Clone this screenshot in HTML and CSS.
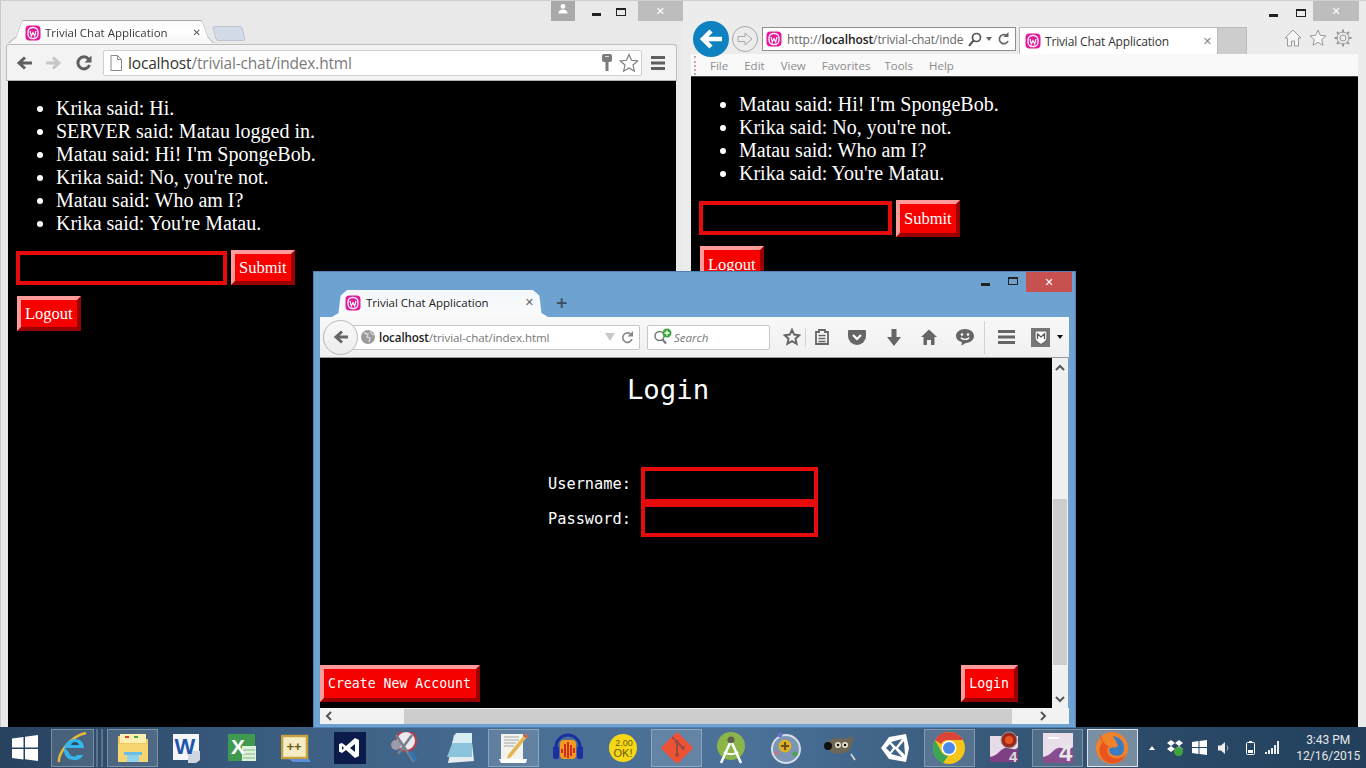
FILE: index.html
```html
<!DOCTYPE html>
<html lang="en">
<head>
<meta charset="utf-8">
<title>Trivial Chat Application</title>
<link rel="stylesheet" href="styles.css">
</head>
<body>
<svg class="defs" width="0" height="0">
  <symbol id="wamp" viewBox="0 0 16 16">
    <rect x="0.5" y="0.5" width="15" height="15" rx="4" fill="#e3189b"/>
    <rect x="3" y="2.5" width="10" height="11" rx="4.5" fill="none" stroke="#fff" stroke-width="1.3"/>
    <path d="M5 6l1.300 5 1.700-3.500L9.700 11 11 6" fill="none" stroke="#fff" stroke-width="1.200"/>
  </symbol>
</svg>

<main class="desktop">

  <!-- Chrome -->
  <section class="win win-chrome">
    <div class="c-top">
      <span class="c-profile"><svg width="12" height="12" viewBox="0 0 12 12"><circle cx="6" cy="3.4" r="2.4" fill="#fff"/><path d="M1.5 10.5c0-3 2-4 4.500-4s4.500 1 4.500 4z" fill="#fff"/></svg></span>
      <span class="w-min dark c-min"></span>
      <span class="w-max dark c-max"></span>
      <span class="w-close c-close">✕</span>
    </div>
    <div class="c-tabs">
      <div class="c-tabshadow"><div class="c-tab">
        <svg class="fav" width="16" height="16"><use href="#wamp"/></svg>
        <span class="c-tabtitle">Trivial Chat Application</span>
        <span class="c-x">✕</span>
      </div></div>
      <div class="c-newtab"></div>
    </div>
    <div class="c-bar">
      <svg class="c-nav" width="18" height="16" viewBox="0 0 18 16"><path d="M16 8H4M9 2.500 3 8l6 5.500" fill="none" stroke="#5f5f5f" stroke-width="3"/></svg>
      <svg class="c-nav2" width="18" height="16" viewBox="0 0 18 16"><path d="M2 8h12M9 2.500 15 8l-6 5.500" fill="none" stroke="#c6c6c6" stroke-width="3"/></svg>
      <svg class="c-nav3" width="18" height="18" viewBox="0 0 18 18"><path d="M14.500 11a6 6 0 1 1-1-6" fill="none" stroke="#5f5f5f" stroke-width="3"/><path d="M16.500 1.500v7h-7z" fill="#5f5f5f"/></svg>
      <div class="c-omni">
        <svg width="12" height="16" viewBox="0 0 12 16"><path d="M1 .5h6.500l4 4v11H1z" fill="#fff" stroke="#8a8a8a"/><path d="M7.500.5v4h4" fill="none" stroke="#8a8a8a"/></svg>
        <span class="c-url"><b>localhost</b>/trivial-chat/index.html</span>
        <svg class="c-key" width="10" height="17" viewBox="0 0 10 17"><path d="M2 0h6a2 2 0 0 1 2 2v4a2 2 0 0 1-2 2H6.500v9h-3V8H2a2 2 0 0 1-2-2V2a2 2 0 0 1 2-2z" fill="#7b7b7b"/><path d="M3 2.500h4" stroke="#ddd"/></svg>
        <svg width="20" height="20" viewBox="0 0 20 20"><path d="M10 1.500l2.500 5.800 6.200.6-4.700 4.100 1.400 6.200L10 15l-5.400 3.200L6 12 1.300 7.900l6.200-.6z" fill="#fff" stroke="#777" stroke-width="1.100"/></svg>
      </div>
      <svg class="c-menu" width="14" height="14" viewBox="0 0 14 14"><path d="M0 0h14v3H0zM0 5.500h14v3H0zM0 11h14v3H0z" fill="#5f5f5f"/></svg>
    </div>
    <div class="chat chat-c">
      <ul class="msgs">
        <li>Krika said: Hi.</li>
        <li>SERVER said: Matau logged in.</li>
        <li>Matau said: Hi! I'm SpongeBob.</li>
        <li>Krika said: No, you're not.</li>
        <li>Matau said: Who am I?</li>
        <li>Krika said: You're Matau.</li>
      </ul>
      <div class="send">
        <div class="field field-c"></div>
        <div class="btn">Submit</div>
      </div>
      <div class="logout"><div class="btn">Logout</div></div>
    </div>
  </section>

  <!-- Internet Explorer -->
  <section class="win win-ie">
    <div class="i-top">
      <span class="w-min dark i-min"></span>
      <span class="w-max dark i-max"></span>
      <span class="w-close i-close">✕</span>
    </div>
    <div class="i-bar">
      <span class="i-back"><svg width="26" height="22" viewBox="0 0 26 22"><path d="M24 11H6M13 3l-8 8 8 8" fill="none" stroke="#fff" stroke-width="4.500"/></svg></span>
      <span class="i-fwd"><svg width="16" height="14" viewBox="0 0 16 14"><path d="M1 4.500h7V1l7 6-7 6V9.500H1z" fill="none" stroke="#a9a9a9"/></svg></span>
      <div class="i-addr">
        <svg class="fav" width="16" height="16"><use href="#wamp"/></svg>
        <span class="i-url">http://<b>localhost</b>/trivial-chat/inde</span>
        <svg width="14" height="15" viewBox="0 0 14 15"><circle cx="8.500" cy="5.500" r="4" fill="none" stroke="#555" stroke-width="1.700"/><path d="M5.500 8.500 1 14" stroke="#555" stroke-width="2"/></svg>
        <span class="tri"></span>
        <svg width="12" height="14" viewBox="0 0 12 14"><path d="M10 9a4.500 4.500 0 1 1-1.500-5.500" fill="none" stroke="#666" stroke-width="1.700"/><path d="M10.500 0v5h-5z" fill="#666"/></svg>
      </div>
      <div class="i-tab">
        <svg class="fav" width="16" height="16"><use href="#wamp"/></svg>
        <span class="i-tabtitle">Trivial Chat Application</span>
        <span class="i-x">✕</span>
      </div>
      <div class="i-newtab"></div>
      <div class="i-tools">
        <svg width="18" height="18" viewBox="0 0 18 18"><path d="M9 1 1 9h2.500v8H7.500v-5h3v5h4V9H17z" fill="#f6f6f6" stroke="#9a9a9a"/></svg>
        <svg width="18" height="18" viewBox="0 0 18 18"><path d="M9 1l2.300 5.300 5.700.5-4.300 3.800 1.300 5.700L9 13.300l-5 3 1.300-5.700L1 6.800l5.700-.5z" fill="#f6f6f6" stroke="#9a9a9a"/></svg>
        <svg width="18" height="18" viewBox="0 0 18 18"><circle cx="9" cy="9" r="3" fill="none" stroke="#9a9a9a"/><circle cx="9" cy="9" r="6" fill="none" stroke="#9a9a9a"/><path d="M9 .5v3M9 14.500v3M.5 9h3M14.500 9h3M3 3l2 2M13 13l2 2M15 3l-2 2M5 13l-2 2" stroke="#9a9a9a" stroke-width="2"/></svg>
      </div>
    </div>
    <nav class="i-menu">
      <span class="i-grip"></span>
      <span class="m1">File</span><span class="m2">Edit</span><span class="m3">View</span><span class="m4">Favorites</span><span class="m5">Tools</span><span>Help</span>
    </nav>
    <div class="chat chat-i">
      <ul class="msgs">
        <li>Matau said: Hi! I'm SpongeBob.</li>
        <li>Krika said: No, you're not.</li>
        <li>Matau said: Who am I?</li>
        <li>Krika said: You're Matau.</li>
      </ul>
      <div class="send">
        <div class="field field-i"></div>
        <div class="btn">Submit</div>
      </div>
      <div class="logout"><div class="btn">Logout</div></div>
    </div>
  </section>

  <!-- Firefox -->
  <section class="win win-ff">
    <div class="f-top">
      <span class="w-min dark f-min"></span>
      <span class="w-max dark f-max"></span>
      <span class="w-close f-close">✕</span>
    </div>
    <div class="f-tabs">
      <div class="f-tab">
        <svg class="fav" width="16" height="16"><use href="#wamp"/></svg>
        <span class="f-tabtitle">Trivial Chat Application</span>
        <span class="f-x">✕</span>
      </div>
      <span class="f-plus">+</span>
    </div>
    <div class="f-bar">
      <div class="f-url">
        <span class="f-back"><svg width="16" height="14" viewBox="0 0 16 14"><path d="M15 7H4M9 1.500 3 7l6 5.500" fill="none" stroke="#666" stroke-width="3"/></svg></span>
        <svg width="14" height="14" viewBox="0 0 14 14"><circle cx="7" cy="7" r="7" fill="#9b9b9b"/><path d="M3 3l4 1-1 3 3 1-1 4M9 1l2 3 2 1" fill="none" stroke="#dcdcdc" stroke-width="1.300"/></svg>
        <span class="f-urltext"><b>localhost</b>/trivial-chat/index.html</span>
        <span class="f-drop"></span>
        <svg width="13" height="13" viewBox="0 0 13 13"><path d="M11 8a4.700 4.700 0 1 1-1.500-5" fill="none" stroke="#888" stroke-width="1.600"/><path d="M12 0v5.500H6.500z" fill="#888"/></svg>
      </div>
      <div class="f-search">
        <svg width="20" height="18" viewBox="0 0 20 18"><circle cx="6.500" cy="8" r="4.500" fill="none" stroke="#777" stroke-width="1.500"/><path d="M9.500 11.500l3.500 4" stroke="#777" stroke-width="2"/><circle cx="14" cy="5" r="4.500" fill="#3da53d"/><path d="M14 2.500v5M11.500 5h5" stroke="#fff" stroke-width="1.300"/></svg>
        <i>Search</i>
      </div>
      <div class="f-tools">
        <svg class="t-star" width="18" height="18" viewBox="0 0 18 18"><path d="M9 1.800l2.200 4.800 5.200.6-3.900 3.500 1.100 5.100L9 13.200l-4.600 2.600 1.100-5.100L1.600 7.200l5.200-.6z" fill="none" stroke="#666" stroke-width="2"/></svg>
        <span class="t-sep2"></span>
        <svg class="t-clip" width="14" height="16" viewBox="0 0 14 16"><path d="M1 3h3V1h6v2h3v12H1z" fill="none" stroke="#666" stroke-width="1.800"/><path d="M3.500 6.500h7M3.500 9.500h7M3.500 12.500h7" stroke="#666" stroke-width="1.500"/></svg>
        <svg class="t-pocket" width="18" height="15" viewBox="0 0 18 15"><path d="M1 0h16a1 1 0 0 1 1 1v5a9 9 0 0 1-18 0V1a1 1 0 0 1 1-1z" fill="#666"/><path d="M5 5l4 4 4-4" fill="none" stroke="#fff" stroke-width="2.200"/></svg>
        <svg class="t-down" width="14" height="17" viewBox="0 0 14 17"><path d="M4.500 0h5v8H14l-7 9-7-9h4.500z" fill="#666"/></svg>
        <svg class="t-home" width="16" height="16" viewBox="0 0 16 16"><path d="M8 .5 16 8h-2.500v8H10v-5H6v5H2.500V8H0z" fill="#666"/></svg>
        <svg class="t-chat" width="18" height="17" viewBox="0 0 18 17"><path d="M9 0c5 0 9 3 9 7s-4 7-8 7c-1 0-2 1.500-5 2.500 1-1.500 1-2.500.5-3.500C2 12 0 10 0 7c0-4 4-7 9-7z" fill="#666"/><circle cx="6" cy="5.500" r="1.300" fill="#fff"/><circle cx="12" cy="5.500" r="1.300" fill="#fff"/><path d="M5 8.500c1 2.500 7 2.500 8 0" fill="none" stroke="#fff" stroke-width="1.300"/></svg>
        <span class="t-sep"></span>
        <svg class="t-menu" width="17" height="14" viewBox="0 0 17 14"><path d="M0 0h17v3H0zM0 5.500h17v3H0zM0 11h17v3H0z" fill="#666"/></svg>
        <span class="t-shield"><svg width="14" height="15" viewBox="0 0 14 15"><path d="M1 1h12v7c0 3-3 5-6 6.500C4 13 1 11 1 8z" fill="#fff" stroke="#666" stroke-width="1.200"/><path d="M3.500 9V4l3.500 3 3.500-3v5" fill="none" stroke="#555" stroke-width="1.300"/></svg></span>
        <span class="t-tri"></span>
      </div>
    </div>
    <div class="f-view">
      <div class="f-page">
        <div class="login">
          <h1 class="login-h">Login</h1>
          <div class="login-row login-row1"><label>Username:</label><div class="field field-l"></div></div>
          <div class="login-row login-row2"><label>Password:</label><div class="field field-l2"></div></div>
          <div class="login-foot">
            <div class="btn btn-mono">Create New Account</div>
            <div class="btn btn-mono">Login</div>
          </div>
        </div>
        <div class="vscroll">
          <svg width="10" height="7" viewBox="0 0 10 7"><path d="M1 6l4-4 4 4" fill="none" stroke="#555" stroke-width="2"/></svg>
          <span class="v-thumb"></span>
          <svg width="10" height="7" viewBox="0 0 10 7"><path d="M1 1l4 4 4-4" fill="none" stroke="#555" stroke-width="2"/></svg>
        </div>
      </div>
      <div class="hscroll">
        <span class="h-left"><svg width="7" height="10" viewBox="0 0 7 10"><path d="M6 1 2 5l4 4" fill="none" stroke="#555" stroke-width="2"/></svg></span>
        <span class="h-thumb"></span>
        <span class="h-right"><svg width="7" height="10" viewBox="0 0 7 10"><path d="M1 1l4 4-4 4" fill="none" stroke="#555" stroke-width="2"/></svg></span>
      </div>
    </div>
  </section>

  <!-- Taskbar -->
  <footer class="taskbar">
    <div class="start"><svg width="26" height="26" viewBox="0 0 26 26"><path d="M0 3.500 11.500 2v10.500H0zM13 1.800 26 0v12.500H13zM0 14h11.500v10.500L0 23zM13 14h13v12l-13-1.700z" fill="#fff"/></svg></div>
    <div class="cell cell-ie on">
      <svg width="32" height="32" viewBox="0 0 32 32"><path d="M2 30C1 22 13 4 29 1" fill="none" stroke="#e8b93a" stroke-width="2.500"/><path d="M8 16h19c0-6-4-9-9-9-6 0-11 5-11 11s4 10 10 10c5 0 8-2 9-5h-6c-1 1-2 1.500-3 1.500-3 0-5-2-5-4z" fill="#35b6ea"/><path d="M14 13h8c-.5-2-2-3-4-3s-3.500 1-4 3z" fill="#2a4a68"/></svg>
    </div>
    <div class="grip"></div>
    <div class="cell on">
      <svg width="32" height="30" viewBox="0 0 32 30"><path d="M1 3h12l2 3h16v23H1z" fill="#f3c95f"/><rect x="3" y="1" width="26" height="9" fill="#fdf0b0"/><rect x="8" y="3" width="4" height="2" fill="#d6463c"/><rect x="17" y="3" width="4" height="2" fill="#4aa34a"/><path d="M1 11h30v18H1z" fill="#f7d571"/><path d="M10 22h12v7H10z" fill="#8fd3ee"/><path d="M7 19h18v3H7z" fill="#6bbfe6"/></svg>
    </div>
    <div class="cell"><svg width="30" height="30" viewBox="0 0 30 30"><rect x="1" y="1" width="26" height="26" fill="#f4f6fa"/><path d="M16 18h12v9l-4 3H16z" fill="#cfd6e2"/><text x="13" y="21" font-size="22" font-weight="700" text-anchor="middle" fill="#1f55ab" font-family="Liberation Sans, sans-serif">W</text></svg></div>
    <div class="cell"><svg width="30" height="30" viewBox="0 0 30 30"><rect x="1" y="1" width="27" height="27" fill="#3f9a4f"/><path d="M15 13h14v15H15z" fill="#dff0dc"/><path d="M16 17h12M16 21h12M16 25h12" stroke="#7fb986"/><text x="11" y="21" font-size="21" font-weight="700" text-anchor="middle" fill="#fff" font-family="Liberation Sans, sans-serif">X</text></svg></div>
    <div class="cell"><svg width="30" height="28" viewBox="0 0 30 28"><rect x="1" y="2" width="25" height="22" fill="#f5ecc4" stroke="#c5a13f" stroke-width="2.500"/><path d="M8 25h20l2 3H12z" fill="#5b8fd8"/><text x="13" y="17" font-size="13" font-weight="700" text-anchor="middle" fill="#6d5a14" font-family="Liberation Sans, sans-serif">++</text></svg></div>
    <div class="cell"><svg width="32" height="32" viewBox="0 0 32 32"><rect width="32" height="32" fill="#0b1c4a"/><path d="M21 6 25 8v16l-4 2-9-8-4 3-3-1.500V12L8 11l4 3zM21 12l-5 4 5 4zM8 14v4l2-2z" fill="#fff" fill-rule="evenodd"/></svg></div>
    <div class="cell"><svg width="30" height="32" viewBox="0 0 30 32"><circle cx="16" cy="9" r="10" fill="#e9e9ef" stroke="#b4404f" stroke-width="2"/><circle cx="6" cy="13" r="5" fill="#9b9bab"/><path d="M6 3 24 30M22 3 8 22" stroke="#777f8d" stroke-width="2.500"/><path d="M20 20l6 9" stroke="#2f78b5" stroke-width="4"/></svg></div>
    <div class="cell"><svg width="30" height="32" viewBox="0 0 30 32"><path d="M10 3 27 1l3 28-26 2z" fill="#e6ebef"/><path d="M12 1h16v24H3z" fill="#8cc3dd"/><path d="M12 1h16v10H8z" fill="#d9edf5"/></svg></div>
    <div class="cell on">
      <svg width="32" height="34" viewBox="0 0 32 34"><path d="M3 3h22v26H3z" fill="#f2f2ee"/><path d="M6 6h15M6 9h15M6 12h12M6 15h10" stroke="#a4a4a4"/><path d="M1 28h28l-1 4H3z" fill="#fff"/><path d="M10 24 27 3l3 2-17 21-4 2z" fill="#e5b34f"/><path d="M27 3l3 2-2 2-3-2z" fill="#d35a4a"/></svg>
    </div>
    <div class="cell"><svg width="30" height="30" viewBox="0 0 30 30"><path d="M3 18v-4a12 12 0 0 1 24 0v4" fill="none" stroke="#1c2f9e" stroke-width="3"/><rect x="0" y="13" width="6" height="13" rx="2" fill="#1c2f9e"/><rect x="24" y="13" width="6" height="13" rx="2" fill="#1c2f9e"/><rect x="7" y="7" width="16" height="19" rx="4" fill="#f59a1f"/><path d="M9 16v4M12 11v13M15 9v16M18 12v11M21 15v5" stroke="#cf2f23" stroke-width="2"/></svg></div>
    <div class="cell"><svg width="30" height="30" viewBox="0 0 30 30"><circle cx="15" cy="15" r="14" fill="#f6d814"/><text x="16" y="13" font-size="9" text-anchor="middle" fill="#665a10" font-family="Liberation Sans, sans-serif">2.00</text><text x="15" y="24" font-size="11" text-anchor="middle" fill="#665a10" font-family="Liberation Sans, sans-serif">OK!</text></svg></div>
    <div class="cell on"><svg width="34" height="34" viewBox="0 0 34 34"><rect x="5.500" y="5.500" width="23" height="23" rx="2" transform="rotate(45 17 17)" fill="#ee5235"/><path d="M12 6l5 5v13M17 11l6 6" fill="none" stroke="#9c4a42" stroke-width="2"/><circle cx="17" cy="11" r="2" fill="#9c4a42"/><circle cx="17" cy="24" r="2" fill="#9c4a42"/><circle cx="23" cy="17" r="2" fill="#9c4a42"/></svg></div>
    <div class="cell"><svg width="28" height="32" viewBox="0 0 28 32"><circle cx="14" cy="14" r="14" fill="#8bb54a"/><circle cx="14" cy="8" r="3.500" fill="#5e5f4f"/><path d="M13 11 4 31M15 11l9 20" stroke="#fff" stroke-width="2.500"/><path d="M7 20c4 3 10 3 14 0" fill="none" stroke="#fff" stroke-width="2"/></svg></div>
    <div class="cell"><svg width="32" height="32" viewBox="0 0 32 32"><circle cx="16" cy="17" r="14" fill="#7b95b4" stroke="#d6dfe9" stroke-width="2"/><circle cx="15" cy="14" r="6.500" fill="#dcb126"/><path d="M15 10v8M11 14h8" stroke="#6a4f0f" stroke-width="2"/><circle cx="10" cy="3" r="2.500" fill="#6870c8"/><circle cx="25" cy="22" r="2.500" fill="#4ea04e"/><circle cx="7" cy="21" r="2" fill="#d47272"/></svg></div>
    <div class="cell"><svg width="34" height="26" viewBox="0 0 34 26"><path d="M2 9c6-6 14-7 18-5l10-3c0 6-1 12-5 15-5 3-13 4-17 1z" fill="#6e6756"/><circle cx="5" cy="11" r="4" fill="#111"/><circle cx="15" cy="10" r="3" fill="#e9e4d0"/><circle cx="22" cy="10" r="3" fill="#e9e4d0"/><circle cx="15" cy="10" r="1.300" fill="#111"/><circle cx="22" cy="10" r="1.300" fill="#111"/><path d="M28 19l4 6" stroke="#ddd" stroke-width="1.500"/></svg></div>
    <div class="cell"><svg width="30" height="30" viewBox="0 0 30 30"><path fill-rule="evenodd" fill="#fff" d="M1 15 9 4 26 1l3 14-3 14-17-3zM11 9l11-3-6 8zM24 8l1 14-7-7zM11 21l4-5 7 8zM6 15l4-4 3 4-3 4z"/></svg></div>
    <div class="cell on"><svg width="34" height="34" viewBox="0 0 34 34"><circle cx="17" cy="17" r="16" fill="#f5c518"/><path d="M17 1a16 16 0 0 1 14 8H17a8 8 0 0 0-8 4L3 9a16 16 0 0 1 14-8z" fill="#dd4438"/><path d="M3 9l7 13a8 8 0 0 0 6 3L11 32A16 16 0 0 1 3 9z" fill="#3aa757"/><circle cx="17" cy="17" r="7.500" fill="#fff"/><circle cx="17" cy="17" r="6" fill="#4b8be8"/></svg></div>
    <div class="cell"><svg class="spill" width="30" height="34" viewBox="0 0 30 34"><path d="M1 5h28v26H1z" fill="#e7dbe8"/><path d="M1 26c8-1 10-8 15-9s10 4 13-1v15H1z" fill="#7e3f83"/><circle cx="20" cy="9" r="8" fill="#9a2a1f" stroke="#9b9b9b"/><circle cx="20" cy="9" r="4" fill="#e8551e"/><text x="20" y="31" font-size="15" font-weight="700" fill="#ddd" font-family="Liberation Sans, sans-serif">4</text></svg></div>
    <div class="cell on"><svg class="spill" width="32" height="32" viewBox="0 0 32 32"><path d="M1 1h30v30H1z" fill="#eadeea"/><path d="M1 25c8-1 10-8 15-9s10 4 15-1v16H1z" fill="#8a4d8e"/><path d="M6 5h11v2H6z" fill="#fff"/><text x="17" y="29" font-size="24" font-weight="700" fill="#e8e8e8" font-family="Liberation Sans, sans-serif">4</text></svg></div>
    <div class="cell cell-active"><svg width="34" height="34" viewBox="0 0 34 34"><circle cx="17" cy="17" r="16" fill="#f0822a"/><path d="M18 5a12 12 0 0 1 11 12c0 3-1 5-3 7-3 1-7 1-10-1-2-2-2-4-1-6 2-1 4-1 5 0l3-2c-1-3-3-7-5-10z" fill="#3a7cc4"/><path d="M5 3c0 5 1 7 3 8-5 5-5 14 2 19 8 5 18 2 21-7-3 4-10 6-15 3-4-2-5-8-2-11-4 0-7-6-9-12z" fill="#e8531f"/></svg></div>
    <div class="tray">
      <span class="tray-up"></span>
      <svg class="tr-drop" width="16" height="17" viewBox="0 0 16 17"><path d="M4 1 8 4 4 7 0 4zM12 1l4 3-4 3-4-3zM4 7l4 3-4 3-4-3zM12 7l4 3-4 3-4-3z" fill="#fff"/><circle cx="11.500" cy="12.500" r="4.500" fill="#3fa33f"/></svg>
      <svg class="tr-win" width="15" height="15" viewBox="0 0 15 15"><path d="M0 2l6.500-1v6H0zM7.500 1 15 0v7H7.500zM0 8h6.500v6L0 13zM7.500 8H15v7l-7.500-1z" fill="#fff"/></svg>
      <svg class="tr-vol" width="12" height="14" viewBox="0 0 12 14"><path d="M0 4.500h3L7 1v12L3 9.500H0z" fill="#eee"/><path d="M9 4.500c1 1.500 1 3.500 0 5" fill="none" stroke="#bbb"/></svg>
      <svg class="tr-bat" width="9" height="14" viewBox="0 0 9 14"><rect x=".5" y="1.500" width="8" height="12" rx="1" fill="none" stroke="#fff"/><rect x="3" y="0" width="3" height="2" fill="#fff"/><rect x="2" y="9" width="5" height="3" fill="#fff"/></svg>
      <svg class="tr-sig" width="15" height="13" viewBox="0 0 15 13"><path d="M0 11h2v2H0zM3 9h2v4H3zM6 7h2v6H6zM9 4h2v9H9zM12 0h2v13h-2z" fill="#eee"/></svg>
      <div class="clock"><span>3:43 PM</span><span>12/16/2015</span></div>
    </div>
  </footer>
</main>
</body>
</html>
```

FILE: styles.css
```css
* { box-sizing: border-box; }
html, body { margin: 0; padding: 0; }
body { width: 1366px; height: 768px; overflow: hidden; background: #000; font-family: "Open Sans", sans-serif; }
.defs { position: absolute; }
.desktop { position: relative; width: 1366px; height: 768px; overflow: hidden; background: #2c4c6b; }
svg { display: block; flex: none; }
svg.spill { overflow: visible; }
.fav { flex: none; }

/* windows sit on a free desktop */
.win { position: absolute; display: flex; flex-direction: column; }
.win-chrome { left: 0; top: 0; width: 683px; height: 728px; background: #e9e9e9; border-left: 1px solid #c9c9c9; border-top: 1px solid #cfcfcf; }
.win-ie { left: 683px; top: 0; width: 683px; height: 728px; background: #ececec; border-top: 1px solid #cfcfcf; }
.win-ff { left: 313px; top: 271px; width: 763px; height: 457px; background: #6da2d1; border: 1px solid #4f83b5; z-index: 2; }

/* window controls */
.w-min { width: 9px; height: 3px; background: #222; margin-top: 12px; }
.w-max { width: 10px; height: 8px; border: 1px solid #222; border-top-width: 2px; margin-top: 7px; }
.w-close { display: flex; align-items: center; justify-content: center; color: #fff; font-size: 11px; font-family: "DejaVu Sans", sans-serif; height: 20px; }

/* Chrome */
.c-top { display: flex; height: 20px; flex: none; }
.c-profile { margin-left: 550px; width: 24px; height: 20px; background: #a9a9a9; display: flex; align-items: flex-start; justify-content: center; padding-top: 2px; }
.c-min { margin-left: 17px; }
.c-max { margin-left: 15px; }
.c-close { margin-left: 12px; width: 46px; background: #bdbdbd; }
.c-tabs { display: flex; height: 23px; flex: none; padding-left: 7px; position: relative; z-index: 1; }
.c-tabshadow { filter: drop-shadow(0 -1px 0 #a8a8a8); margin-top: 0; }
.c-tab { width: 206px; height: 23px; display: flex; align-items: center; padding: 0 13px 0 17px; background: linear-gradient(#f8f8f8, #fff 40%, #f5f5f5); clip-path: polygon(0 100%, 4% 72%, 7% 0, 94% 0, 97% 72%, 100% 100%); }
.c-tabtitle { font-size: 11.500px; color: #3a3a3a; margin-left: 4px; flex: 1; white-space: nowrap; }
.c-x { font-size: 10px; color: #555; font-family: "DejaVu Sans", sans-serif; }
.c-newtab { width: 30px; height: 15px; margin: 5px 0 0 0; background: #d3dbe8; border: 1px solid #bcc4d0; border-radius: 3px; transform: skewX(15deg); }
.c-bar { display: flex; align-items: center; height: 37px; flex: none; margin: 0 6px 0 5px; background: #f3f3f3; border: 1px solid #bdbdbd; border-bottom: 1px solid #b0b0b0; border-radius: 3px 3px 0 0; }
.c-nav { margin-left: 9px; }
.c-nav2 { margin-left: 10px; }
.c-nav3 { margin-left: 13px; }
.c-omni { display: flex; align-items: center; width: 539px; height: 26px; margin-left: 10px; padding: 0 2px 0 6px; background: #fff; border: 1px solid #cfcfcf; border-radius: 2px; }
.c-url { flex: 1; margin-left: 6px; font-size: 15.500px; letter-spacing: -.17px; color: #7a7a7a; white-space: nowrap; }
.c-url b { font-weight: 400; color: #333; }
.c-key { margin-right: 7px; }
.c-menu { margin-left: 9px; }

/* chat pages */
.chat { flex: 1; background: #000; color: #fff; font-family: "Liberation Serif", serif; padding: 0 8px; min-height: 0; overflow: hidden; }
.chat-c { margin: 0 7px; }
.chat-i { margin: 0 8px; }
.msgs { margin: 16px 0; padding: 0 0 0 40px; font-size: 20px; line-height: 23px; }
.send { display: flex; align-items: flex-start; gap: 4px; }
.send .btn { margin-top: -1px; }
.field { border: 4px solid #e70c0c; background: #000; height: 34px; flex: none; }
.field-c { width: 211px; }
.field-i { width: 193px; }
.btn { flex: none; background: #f60000; color: #fff; font-size: 16.500px; line-height: 19px; height: 35px; border-width: 4px; border-style: solid; border-color: #ff9a9a #990000 #990000 #ff9a9a; padding: 4px; display: flex; align-items: center; }
.logout { display: flex; margin-top: 11px; padding-left: 1px; }
.chat-i .logout { margin-top: 9px; }
.chat-i .btn { height: 37px; }

/* IE */
.i-top { display: flex; height: 20px; flex: none; }
.i-min { margin-left: 586px; margin-top: 13px; }
.i-max { margin-left: 18px; margin-top: 8px; }
.i-close { margin-left: 7px; width: 46px; background: #bdbdbd; }
.i-bar { display: flex; align-items: flex-start; height: 33px; flex: none; padding-left: 10px; }
.i-back { width: 36px; height: 36px; margin-top: 0; border-radius: 50%; background: #0e82c0; display: flex; align-items: center; justify-content: center; position: relative; z-index: 1; }
.i-fwd { width: 26px; height: 26px; margin: 5px 0 0 3px; border-radius: 50%; border: 1px solid #a9a9a9; display: flex; align-items: center; justify-content: center; }
.i-addr { display: flex; align-items: center; gap: 4px; width: 254px; height: 24px; margin: 6px 0 0 4px; padding: 0 5px 0 3px; background: #fff; border: 1px solid #8f8f8f; }
.i-url { flex: 1; margin-left: 1px; font-size: 12px; letter-spacing: -.1px; color: #666; white-space: nowrap; }
.i-url b { font-weight: 600; color: #222; }
.tri { width: 0; height: 0; border: 3px solid transparent; border-top: 4px solid #666; margin: 3px 2px 0 0; }
.i-tab { display: flex; align-items: center; width: 199px; height: 27px; margin: 6px 0 0 3px; padding: 0 5px 0 5px; background: #fff; border: 1px solid #bbb; border-bottom: none; }
.i-tabtitle { flex: 1; margin-left: 4px; font-size: 12px; letter-spacing: -.17px; color: #333; white-space: nowrap; }
.i-x { font-size: 11px; color: #888; font-family: "DejaVu Sans", sans-serif; }
.i-newtab { width: 29px; height: 27px; margin-top: 6px; background: #cdcdcd; border-top: 1px solid #bbb; border-right: 1px solid #bbb; }
.i-tools { display: flex; gap: 7px; margin: 8px 0 0 37px; }
.i-menu { display: flex; align-items: center; height: 23px; flex: none; margin: 0 8px; background: #f9f9f9; color: #8c8c8c; font-size: 11.500px; padding-left: 0; border-bottom: 1px solid #444; }
.i-grip { width: 2px; height: 19px; margin: 0 14px 0 3px; border-left: 2px dotted #c9a8a8; }
.m1 { margin-right: 16px; }
.m2 { margin-right: 16px; }
.m3 { margin-right: 16px; }
.m4 { margin-right: 14px; }
.m5 { margin-right: 16px; }

/* Firefox */
.f-top { display: flex; height: 20px; flex: none; }
.f-min { margin-left: 667px; margin-top: 11px; }
.f-max { margin-left: 18px; margin-top: 5px; }
.f-close { margin-left: 8px; width: 46px; background: #c75050; }
.f-tabs { display: flex; align-items: flex-end; height: 25px; flex: none; padding-left: 18px; }
.f-tab { display: flex; align-items: center; width: 216px; height: 27px; margin-top: -2px; padding: 0 9px 2px 13px; background: linear-gradient(#f4f8fb, #fafafa); clip-path: polygon(0 100%, 3% 85%, 4% 20%, 7% 0, 93% 0, 96% 20%, 97% 85%, 100% 100%); }
.f-tabtitle { flex: 1; margin-left: 5px; font-size: 11.500px; color: #222; white-space: nowrap; }
.f-x { font-size: 11px; color: #666; font-family: "DejaVu Sans", sans-serif; margin-right: 5px; }
.f-plus { margin: 0 0 3px 8px; font-size: 20px; line-height: 22px; color: #3a4c5e; font-weight: 600; }
.f-bar { display: flex; align-items: center; height: 41px; flex: none; margin: 0 6px; padding-left: 3px; background: linear-gradient(#f8f8f8, #f0f0f0); border-bottom: 1px solid #9a9a9a; }
.f-url { display: flex; align-items: center; width: 317px; height: 25px; padding-right: 5px; background: #fff; border: 1px solid #c8c8c8; border-radius: 12px 2px 2px 12px; }
.f-back { width: 35px; height: 35px; border-radius: 50%; margin: 0 3px 0 -1px; background: linear-gradient(#f9f9f9, #ececec); border: 1px solid #b9b9b9; display: flex; align-items: center; justify-content: center; flex: none; }
.f-urltext { flex: 1; margin-left: 4px; font-size: 11.600px; letter-spacing: -.1px; color: #777; white-space: nowrap; }
.f-urltext b { font-weight: 600; color: #222; }
.f-drop { width: 0; height: 0; border: 5px solid transparent; border-top: 8px solid #c8c8c8; border-bottom: none; margin-right: 6px; }
.f-search { display: flex; align-items: center; gap: 1px; width: 123px; height: 25px; margin-left: 7px; padding-left: 5px; background: #fff; border: 1px solid #c8c8c8; border-radius: 2px; font-size: 11.500px; color: #777; }
.f-tools { display: flex; align-items: center; height: 41px; margin-left: 13px; }
.t-sep2 { width: 1px; height: 19px; background: #d2d2d2; margin-left: 4px; }
.t-clip { margin-left: 9px; }
.t-pocket { margin-left: 19px; }
.t-down { margin-left: 21px; }
.t-home { margin-left: 20px; }
.t-chat { margin-left: 19px; }
.t-sep { width: 1px; height: 33px; background: #d2d2d2; margin-left: 10px; }
.t-menu { margin-left: 13px; }
.t-shield { width: 19px; height: 19px; margin-left: 16px; background: #777; display: flex; align-items: center; justify-content: center; }
.t-tri { width: 0; height: 0; border: 3.500px solid transparent; border-top: 4px solid #111; border-bottom: none; margin-left: 7px; }
.f-view { display: flex; flex-direction: column; flex: 1; margin: 0 6px 3px; min-height: 0; }
.f-page { display: flex; height: 350px; flex: none; }
.login { width: 732px; background: #000; color: #fff; display: flex; flex-direction: column; font-family: "DejaVu Sans Mono", monospace; }
.login-h { width: 696px; margin: 16px 0 0; text-align: center; font-size: 27.300px; line-height: 32px; font-weight: 400; }
.login-row { display: flex; align-items: flex-start; gap: 10px; padding-left: 228px; font-size: 15.300px; }
.login-row1 { margin-top: 61px; height: 36px; line-height: 35px; }
.login-row2 { height: 34px; line-height: 33px; }
.field-l { width: 177px; height: 36px; }
.field-l2 { width: 177px; height: 34px; }
.login-foot { display: flex; justify-content: space-between; width: 698px; margin-top: auto; margin-bottom: 6px; }
.btn-mono { font-family: "DejaVu Sans Mono", monospace; font-size: 13.200px; height: 37px; padding: 4px 5px 4px 4px; }
.vscroll { display: flex; flex-direction: column; align-items: center; width: 16px; padding: 6px 0 5px; background: #f0f0f0; }
.v-thumb { width: 14px; height: 166px; margin-top: auto; margin-bottom: 31px; background: #cdcdcd; }
.hscroll { display: flex; align-items: center; height: 16px; flex: none; background: #f2f2f2; }
.h-left { width: 84px; padding-left: 5px; }
.h-thumb { width: 608px; height: 15px; background: #cdcdcd; }
.h-right { margin-left: 28px; }

/* Taskbar */
.taskbar { position: absolute; left: 0; top: 727px; width: 1366px; height: 41px; display: flex; align-items: center; gap: 3.430px; background: linear-gradient(90deg, #27425f 0, #3a5d80 20%, #4a6f95 40%, #4b7198 55%, #38597a 72%, #2b4a68 85%, #22405c 100%); }
.start { width: 49px; height: 40px; display: flex; align-items: center; justify-content: center; flex: none; margin-right: -1px; }
.cell { width: 51px; height: 38px; display: flex; align-items: center; justify-content: center; flex: none; border: 1px solid transparent; }
.cell-ie { width: 43px; }
.on { background: rgba(255,255,255,.14); border-color: rgba(255,255,255,.28); }
.cell-active { background: rgba(255,255,255,.36); border-color: rgba(255,255,255,.75); }
.grip { width: 7px; height: 38px; margin: 0 1px 0 -2px; border-left: 2px solid rgba(255,255,255,.22); border-right: 2px solid rgba(255,255,255,.22); flex: none; }
.tray { display: flex; align-items: center; position: relative; flex: 1; height: 41px; color: #eee; margin-left: -3px; }
.tray-up { width: 0; height: 0; border: 3.500px solid transparent; border-bottom: 4px solid #fff; border-top: none; margin-left: 11px; }
.tr-drop { margin-left: 12px; }
.tr-win { margin-left: 9px; }
.tr-vol { margin-left: 11px; }
.tr-bat { margin-left: 16px; }
.tr-sig { margin-left: 10px; }
.clock { display: flex; flex-direction: column; align-items: center; margin-left: 16px; font-family: Roboto, sans-serif; font-size: 12px; line-height: 16px; color: #e8e8e8; }
```
